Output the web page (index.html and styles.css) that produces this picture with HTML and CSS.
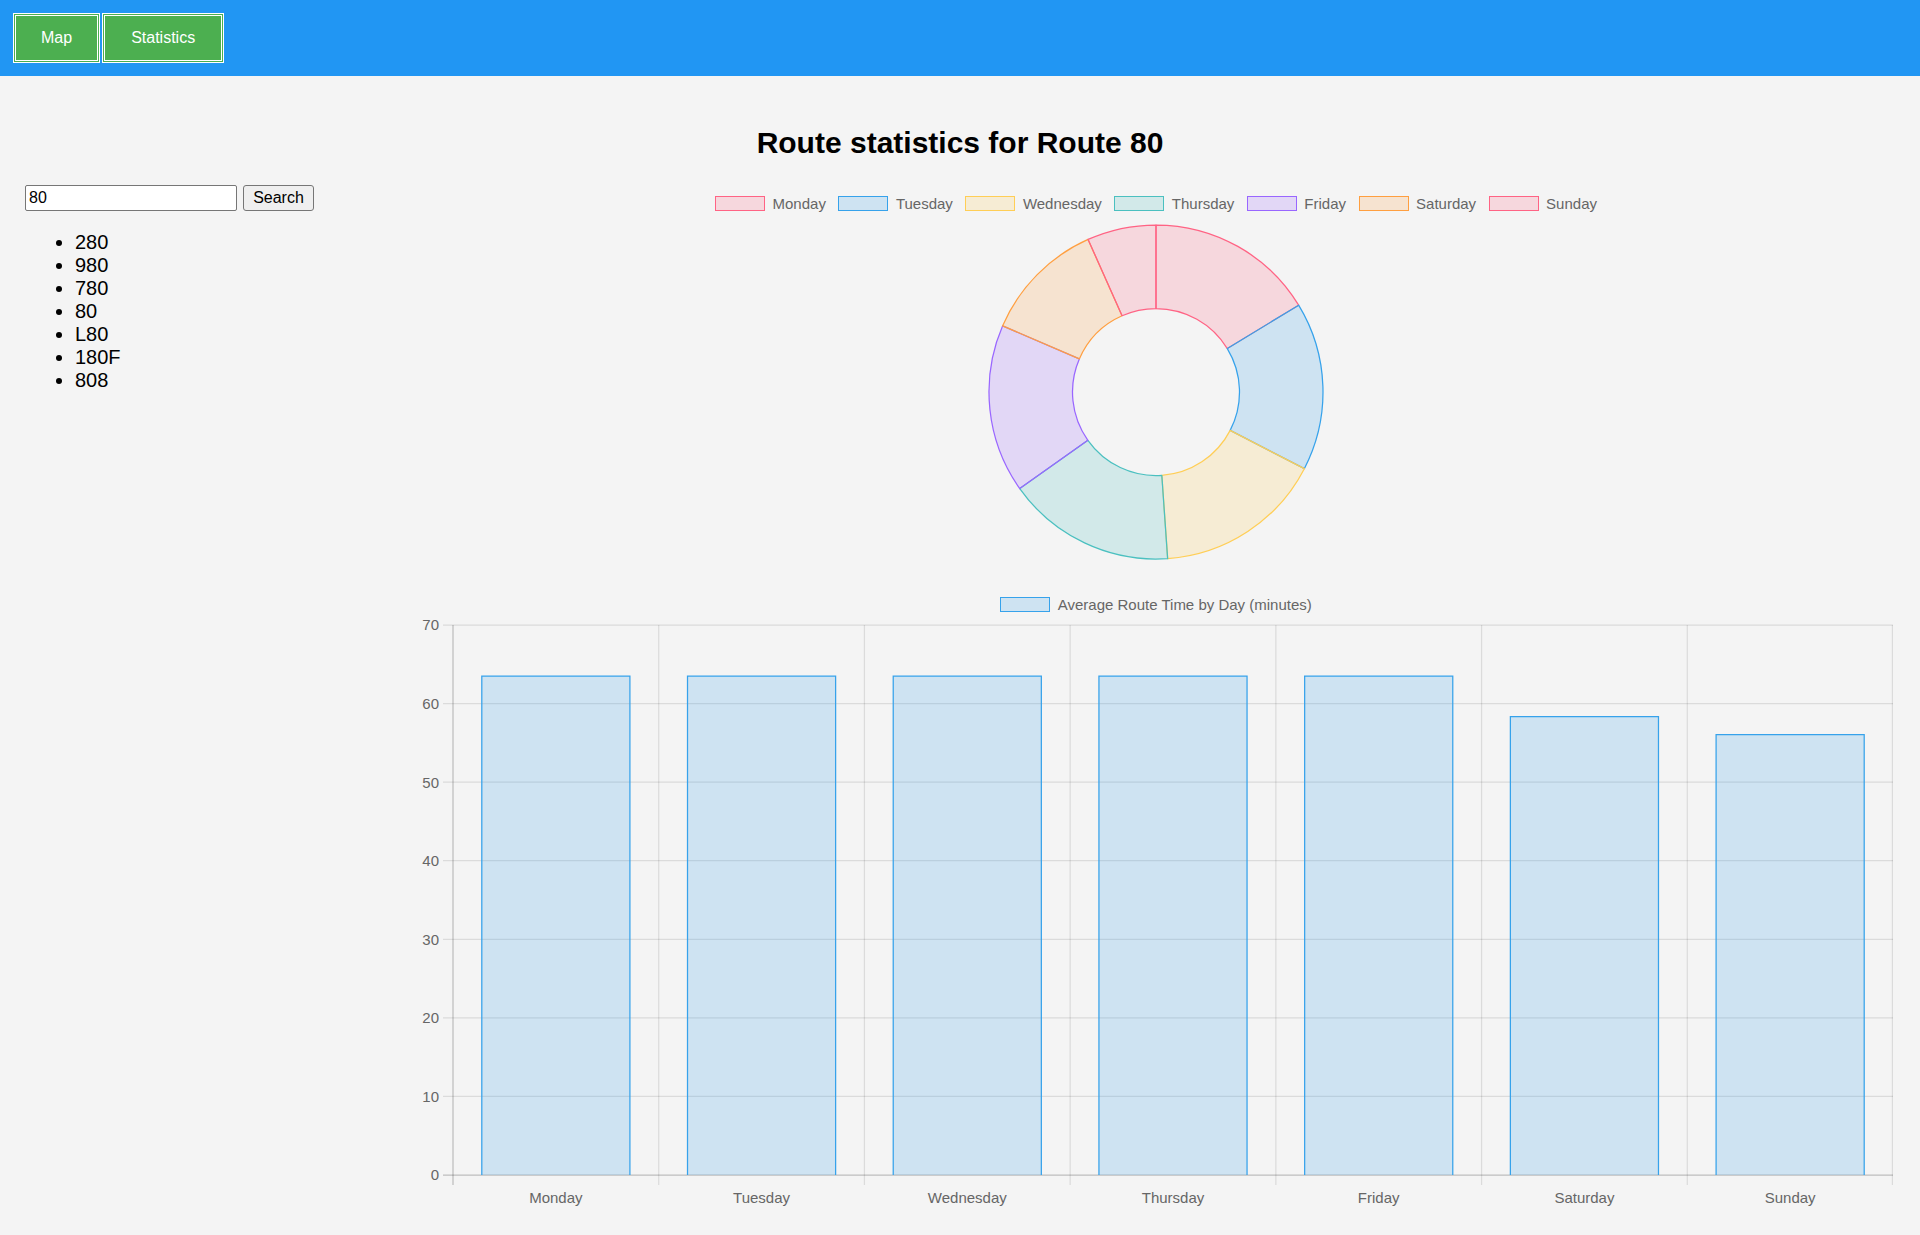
FILE: index.html
```html
<!DOCTYPE html>
<html lang="en">
<head>
<meta charset="utf-8">
<title>Route statistics</title>
<link rel="stylesheet" href="styles.css">
</head>
<body>
<header class="topbar">
  <button class="nav-btn">Map</button>
  <button class="nav-btn nav-wide">Statistics</button>
</header>

<h1 class="title">Route statistics for Route 80</h1>

<div class="content">
  <aside class="sidebar">
    <form class="search">
      <input class="search-input" type="text" value="80">
      <button class="search-btn" type="button">Search</button>
    </form>
    <ul class="routes">
      <li>280</li>
      <li>980</li>
      <li>780</li>
      <li>80</li>
      <li>L80</li>
      <li>180F</li>
      <li>808</li>
    </ul>
  </aside>

  <main class="charts">
    <div class="legend legend-donut">
      <div class="legend-item"><span class="swatch sw-red"></span><span class="legend-label">Monday</span></div>
      <div class="legend-item"><span class="swatch sw-blue"></span><span class="legend-label">Tuesday</span></div>
      <div class="legend-item"><span class="swatch sw-yellow"></span><span class="legend-label">Wednesday</span></div>
      <div class="legend-item"><span class="swatch sw-teal"></span><span class="legend-label">Thursday</span></div>
      <div class="legend-item"><span class="swatch sw-purple"></span><span class="legend-label">Friday</span></div>
      <div class="legend-item"><span class="swatch sw-orange"></span><span class="legend-label">Saturday</span></div>
      <div class="legend-item"><span class="swatch sw-red"></span><span class="legend-label">Sunday</span></div>
    </div>

    <svg class="donut" width="1474" height="336" viewBox="0 0 1474 336">
      <path class="seg seg-red" d="M737 1 A167 167 0 0 1 879.64 81.16 L808.32 124.58 A83.5 83.5 0 0 0 737 84.5 Z"/>
      <path class="seg seg-blue" d="M879.64 81.16 A167 167 0 0 1 885.35 244.68 L811.18 206.34 A83.5 83.5 0 0 0 808.32 124.58 Z"/>
      <path class="seg seg-yellow" d="M885.35 244.68 A167 167 0 0 1 748.65 334.59 L742.82 251.30 A83.5 83.5 0 0 0 811.18 206.34 Z"/>
      <path class="seg seg-teal" d="M748.65 334.59 A167 167 0 0 1 600.76 264.58 L668.88 216.29 A83.5 83.5 0 0 0 742.82 251.30 Z"/>
      <path class="seg seg-purple" d="M600.76 264.58 A167 167 0 0 1 583.66 101.85 L660.33 134.93 A83.5 83.5 0 0 0 668.88 216.29 Z"/>
      <path class="seg seg-orange" d="M583.66 101.85 A167 167 0 0 1 669.07 15.44 L703.04 91.72 A83.5 83.5 0 0 0 660.33 134.93 Z"/>
      <path class="seg seg-red" d="M669.07 15.44 A167 167 0 0 1 737 1 L737 84.5 A83.5 83.5 0 0 0 703.04 91.72 Z"/>
    </svg>

    <div class="legend legend-bar">
      <div class="legend-item"><span class="swatch sw-blue"></span><span class="legend-label">Average Route Time by Day (minutes)</span></div>
    </div>

    <svg class="bars" width="1474" height="603" viewBox="0 0 1474 603">
      <g class="grid">
        <line x1="24" y1="12" x2="1474" y2="12"/>
        <line x1="24" y1="90.57" x2="1474" y2="90.57"/>
        <line x1="24" y1="169.14" x2="1474" y2="169.14"/>
        <line x1="24" y1="247.71" x2="1474" y2="247.71"/>
        <line x1="24" y1="326.29" x2="1474" y2="326.29"/>
        <line x1="24" y1="404.86" x2="1474" y2="404.86"/>
        <line x1="24" y1="483.43" x2="1474" y2="483.43"/>
        <line x1="239.71" y1="12" x2="239.71" y2="572"/>
        <line x1="445.43" y1="12" x2="445.43" y2="572"/>
        <line x1="651.14" y1="12" x2="651.14" y2="572"/>
        <line x1="856.86" y1="12" x2="856.86" y2="572"/>
        <line x1="1062.57" y1="12" x2="1062.57" y2="572"/>
        <line x1="1268.29" y1="12" x2="1268.29" y2="572"/>
        <line x1="1473.4" y1="12" x2="1473.4" y2="572"/>
      </g>
      <g class="grid-zero">
        <line x1="24" y1="562" x2="1474" y2="562"/>
        <line x1="34" y1="12" x2="34" y2="572"/>
      </g>
      <g class="ylabels">
        <text x="20" y="17.4">70</text>
        <text x="20" y="95.97">60</text>
        <text x="20" y="174.54">50</text>
        <text x="20" y="253.11">40</text>
        <text x="20" y="331.69">30</text>
        <text x="20" y="410.26">20</text>
        <text x="20" y="488.83">10</text>
        <text x="20" y="567.4">0</text>
      </g>
      <g class="bar">
        <rect x="62.8" y="63.1" width="148.11" height="498.9"/>
        <path d="M62.8 562 V63.1 H210.91 V562"/>
        <rect x="268.51" y="63.1" width="148.11" height="498.9"/>
        <path d="M268.51 562 V63.1 H416.62 V562"/>
        <rect x="474.23" y="63.1" width="148.11" height="498.9"/>
        <path d="M474.23 562 V63.1 H622.34 V562"/>
        <rect x="679.94" y="63.1" width="148.11" height="498.9"/>
        <path d="M679.94 562 V63.1 H828.05 V562"/>
        <rect x="885.66" y="63.1" width="148.11" height="498.9"/>
        <path d="M885.66 562 V63.1 H1033.77 V562"/>
        <rect x="1091.37" y="103.7" width="148.11" height="458.3"/>
        <path d="M1091.37 562 V103.7 H1239.48 V562"/>
        <rect x="1297.09" y="121.7" width="148.11" height="440.3"/>
        <path d="M1297.09 562 V121.7 H1445.2 V562"/>
      </g>
      <g class="xlabels">
        <text x="136.86" y="590">Monday</text>
        <text x="342.57" y="590">Tuesday</text>
        <text x="548.29" y="590">Wednesday</text>
        <text x="754" y="590">Thursday</text>
        <text x="959.71" y="590">Friday</text>
        <text x="1165.43" y="590">Saturday</text>
        <text x="1371.14" y="590">Sunday</text>
      </g>
    </svg>
  </main>
</div>
</body>
</html>
```

FILE: styles.css
```css
html {
  background: #f4f4f4;
}

body {
  margin: 0;
  background: #f4f4f4;
  font-family: "Liberation Sans", Arial, Helvetica, sans-serif;
  color: #000;
}

/* ---------- top bar ---------- */
.topbar {
  display: flex;
  gap: 2px;
  padding: 13px;
  background: #2196f3;
}

.nav-btn {
  height: 50px;
  padding: 0 25px;
  background: #4caf50;
  border: 3px double #ffffff;
  color: #ffffff;
  font-family: "Liberation Sans", Arial, sans-serif;
  font-size: 16px;
  cursor: pointer;
}

.nav-wide {
  padding: 0 26px;
}

/* ---------- title ---------- */
.title {
  margin: 50px 0 0;
  font-size: 30px;
  line-height: 34px;
  font-weight: bold;
  text-align: center;
}

/* ---------- layout ---------- */
.content {
  display: flex;
  align-items: flex-start;
}

.sidebar {
  width: 419px;
  flex: none;
  box-sizing: border-box;
  padding: 25px 0 0 25px;
}

.search {
  display: flex;
  gap: 6px;
  margin: 0;
}

.search-input {
  width: 212px;
  height: 26px;
  box-sizing: border-box;
  padding: 0 3px;
  border: 1px solid #767676;
  border-radius: 2px;
  background: #ffffff;
  font-family: "Liberation Sans", Arial, sans-serif;
  font-size: 16px;
  color: #000;
}

.search-btn {
  width: 71px;
  height: 26px;
  box-sizing: border-box;
  padding: 0;
  border: 1px solid #767676;
  border-radius: 3px;
  background: #efefef;
  font-family: "Liberation Sans", Arial, sans-serif;
  font-size: 16px;
  color: #000;
}

.routes {
  margin: 20px 0;
  padding-left: 50px;
  font-size: 20px;
  line-height: 23px;
}

/* ---------- charts ---------- */
.charts {
  width: 1474px;
  flex: none;
  padding-top: 35.5px;
}

.legend {
  display: flex;
  justify-content: center;
  align-items: center;
  gap: 12.5px;
  height: 15px;
}

.legend-bar {
  margin-top: 37px;
}

.legend-item {
  display: flex;
  align-items: center;
}

.swatch {
  display: block;
  width: 50px;
  height: 15px;
  box-sizing: border-box;
  border: 1.25px solid;
}

.legend-label {
  margin-left: 7.5px;
  font-size: 15px;
  line-height: 15px;
  color: #666666;
  white-space: nowrap;
}

.sw-red { background: rgba(255, 99, 132, 0.2); border-color: rgb(255, 99, 132); }
.sw-blue { background: rgba(54, 162, 235, 0.2); border-color: rgb(54, 162, 235); }
.sw-yellow { background: rgba(255, 206, 86, 0.2); border-color: rgb(255, 206, 86); }
.sw-teal { background: rgba(75, 192, 192, 0.2); border-color: rgb(75, 192, 192); }
.sw-purple { background: rgba(153, 102, 255, 0.2); border-color: rgb(153, 102, 255); }
.sw-orange { background: rgba(255, 159, 64, 0.2); border-color: rgb(255, 159, 64); }

.donut {
  display: block;
  margin-top: 13.5px;
  overflow: visible;
}

.seg {
  stroke-width: 1.25;
  stroke-linejoin: round;
}

.seg-red { fill: rgba(255, 99, 132, 0.2); stroke: rgb(255, 99, 132); }
.seg-blue { fill: rgba(54, 162, 235, 0.2); stroke: rgb(54, 162, 235); }
.seg-yellow { fill: rgba(255, 206, 86, 0.2); stroke: rgb(255, 206, 86); }
.seg-teal { fill: rgba(75, 192, 192, 0.2); stroke: rgb(75, 192, 192); }
.seg-purple { fill: rgba(153, 102, 255, 0.2); stroke: rgb(153, 102, 255); }
.seg-orange { fill: rgba(255, 159, 64, 0.2); stroke: rgb(255, 159, 64); }

.bars {
  display: block;
  margin-top: 1px;
  overflow: visible;
  font-family: "Liberation Sans", Arial, sans-serif;
  font-size: 15px;
}

.grid line {
  stroke: rgba(0, 0, 0, 0.1);
  stroke-width: 1.25;
}

.grid-zero line {
  stroke: rgba(0, 0, 0, 0.22);
  stroke-width: 1.25;
}

.ylabels text {
  fill: #666666;
  text-anchor: end;
}

.xlabels text {
  fill: #666666;
  text-anchor: middle;
}

.bar rect {
  fill: rgba(54, 162, 235, 0.2);
}

.bar path {
  fill: none;
  stroke: rgb(54, 162, 235);
  stroke-width: 1.25;
}
```
